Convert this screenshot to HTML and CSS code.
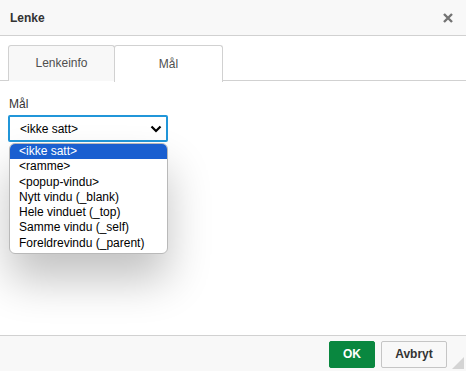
FILE: index.html
```html
<!DOCTYPE html>
<html lang="no">
<head>
<meta charset="utf-8">
<title>Lenke</title>
<link rel="stylesheet" href="styles.css">
</head>
<body>
<div class="dialog">
  <div class="titlebar">
    <span class="title">Lenke</span>
    <span class="close">
      <svg width="12" height="12" viewBox="0 0 12 12"><path d="M2 2 L10 10 M10 2 L2 10" stroke="#737373" stroke-width="2.4" stroke-linecap="butt"/></svg>
    </span>
  </div>
  <div class="content">
    <div class="tabs">
      <div class="tab">Lenkeinfo</div>
      <div class="tab active">Mål</div>
    </div>
    <div class="panel">
      <div class="label">Mål</div>
      <div class="field">
        <div class="select">
          <span>&lt;ikke satt&gt;</span>
          <svg width="12" height="8" viewBox="0 0 12 8"><path d="M1.5 1.5 L6 6 L10.5 1.5" fill="none" stroke="#000" stroke-width="2.2"/></svg>
        </div>
        <ul class="options">
          <li class="sel">&lt;ikke satt&gt;</li>
          <li>&lt;ramme&gt;</li>
          <li>&lt;popup-vindu&gt;</li>
          <li>Nytt vindu (_blank)</li>
          <li>Hele vinduet (_top)</li>
          <li>Samme vindu (_self)</li>
          <li>Foreldrevindu (_parent)</li>
        </ul>
      </div>
    </div>
  </div>
  <div class="footer">
    <button class="btn ok">OK</button>
    <button class="btn cancel">Avbryt</button>
    <span class="grip">
      <svg width="12" height="12" viewBox="0 0 12 12"><path d="M12 0 L12 12 L0 12 Z" fill="#d4d4d4"/></svg>
    </span>
  </div>
</div>
</body>
</html>
```

FILE: styles.css
```css
* { box-sizing: border-box; }
html, body { margin: 0; padding: 0; background: #fff; }
body {
  font-family: "Liberation Sans", Arial, sans-serif;
  font-size: 12px;
  color: #333;
}
.dialog {
  width: 466px;
  height: 371px;
  display: flex;
  flex-direction: column;
  overflow: hidden;
}
.titlebar {
  height: 36px;
  flex: none;
  background: #f8f8f8;
  border-bottom: 1px solid #d1d1d1;
  display: flex;
  align-items: center;
  justify-content: space-between;
  padding: 0 12px 0 10px;
}
.title { font-weight: bold; font-size: 12px; color: #333; }
.close { display: flex; width: 12px; height: 12px; }
.content { flex: 1; padding: 9px 0 0; }
.tabs {
  display: flex;
  height: 36px;
  border-bottom: 1px solid #d1d1d1;
  padding-left: 8px;
}
.tab {
  width: 107px;
  height: 36px;
  border: 1px solid #d1d1d1;
  border-bottom: none;
  background: #f8f8f8;
  border-radius: 3px 3px 0 0;
  display: flex;
  align-items: center;
  justify-content: center;
  padding-bottom: 1px;
  color: #4f4f4f;
  font-size: 12px;
}
.tab + .tab { margin-left: -1px; width: 109px; }
.tab.active { background: #fff; height: 37px; margin-bottom: -1px; }
.panel { padding: 16px 8px 0; }
.label { font-size: 12px; color: #333; height: 14px; line-height: 14px; margin-left: 1px; margin-bottom: 4px; }
.field { position: relative; width: 160px; }
.select {
  height: 27px;
  border: 2px solid #2196d9;
  border-radius: 2px;
  display: flex;
  align-items: center;
  justify-content: space-between;
  padding: 0 4px 0 10px;
  color: #000;
  font-size: 12px;
}
.options {
  position: absolute;
  left: 1px;
  top: 28px;
  width: 159px;
  margin: 0;
  padding: 0 0 2px;
  list-style: none;
  background: #fff;
  border: 1px solid #b9b9b9;
  border-radius: 6px;
  overflow: hidden;
  box-shadow: 0 26px 44px rgba(0, 0, 0, 0.24);
  color: #000;
}
.options li {
  height: 15.3px;
  line-height: 15px;
  padding-left: 9px;
  font-size: 12px;
  white-space: nowrap;
}
.options li.sel { background: #1a5fd0; color: #fff; }
.footer {
  height: 36px;
  flex: none;
  background: #f8f8f8;
  border-top: 1px solid #d1d1d1;
  display: flex;
  align-items: center;
  justify-content: flex-end;
  padding-right: 19px;
  gap: 6px;
  position: relative;
}
.btn {
  height: 27px;
  font-family: "Liberation Sans", Arial, sans-serif;
  font-size: 12px;
  font-weight: bold;
  border-radius: 2px;
  padding: 0;
  margin-top: 1px;
}
.ok { width: 46px; background: #09873f; border: 1px solid #09873f; color: #fff; }
.cancel { width: 66px; background: #f8f8f8; border: 1px solid #c5c5c5; color: #333; }
.grip { position: absolute; right: 2px; bottom: 2px; display: flex; }
```
